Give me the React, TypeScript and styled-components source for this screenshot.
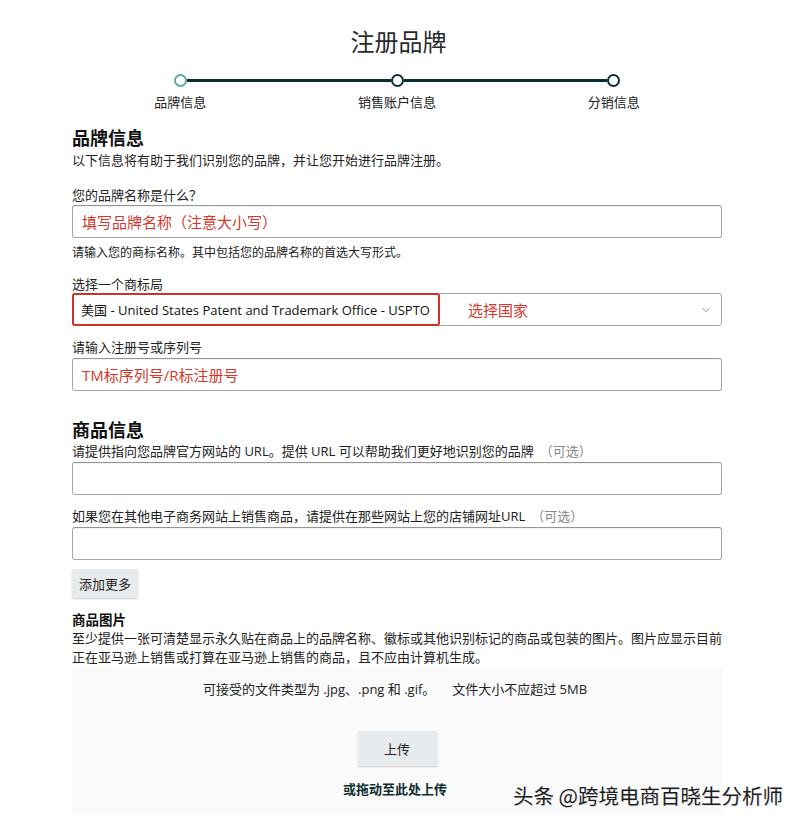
import React from "react";
import styled, { createGlobalStyle } from "styled-components";
import { ChevronDown } from "lucide-react";

const GlobalStyle = createGlobalStyle`
  html, body { margin: 0; padding: 0; background: #fff; }
  body {
    font-family: "Open Sans", "Noto Sans CJK SC", sans-serif;
    color: #111;
  }
`;

const Page = styled.div`
  position: relative;
  width: 797px;
  height: 822px;
  overflow: hidden;
  padding-top: 26px;
  box-sizing: border-box;
`;

const Title = styled.h1`
  margin: 0;
  font-size: 24px;
  line-height: 32px;
  font-weight: 400;
  text-align: center;
  color: #2a2a2a;
`;

const Content = styled.div`
  width: 650px;
  margin-left: 72px;
`;

const Stepper = styled.div`
  display: grid;
  grid-template-columns: repeat(3, 1fr);
  margin-top: 16px;
`;

const Step = styled.div`
  display: flex;
  flex-direction: column;
  align-items: center;
`;

const DotRow = styled.div`
  display: flex;
  align-items: center;
  width: 100%;
  height: 13px;
`;

const Seg = styled.div<{ $hidden?: boolean }>`
  flex: 1;
  height: 3px;
  background: ${(p) => (p.$hidden ? "transparent" : "#0e2d31")};
`;

const Dot = styled.div<{ $active?: boolean }>`
  flex: none;
  width: 13px;
  height: 13px;
  box-sizing: border-box;
  border-radius: 50%;
  border: 2px solid ${(p) => (p.$active ? "#5aa9a9" : "#0e2d31")};
  background: #fff;
`;

const StepLabel = styled.div`
  margin-top: 6px;
  font-size: 13px;
  line-height: 18px;
  color: #222;
`;

const SectionTitle = styled.h2<{ $mt: number }>`
  margin: ${(p) => p.$mt}px 0 0;
  font-size: 18px;
  line-height: 24px;
  font-weight: 700;
  color: #111;
`;

const Text = styled.div<{ $mt?: number; $size?: number }>`
  margin-top: ${(p) => p.$mt ?? 0}px;
  font-size: ${(p) => p.$size ?? 13}px;
  line-height: 18px;
  color: #222;
`;

const Optional = styled.span`
  color: #888;
  margin-left: 6px;
`;

const Box = styled.div<{ $mt: number }>`
  margin-top: ${(p) => p.$mt}px;
  height: 33px;
  box-sizing: border-box;
  border: 1px solid #a6a6a6;
  border-top-color: #949494;
  border-radius: 3px;
  box-shadow: inset 0 1px 0 rgba(0, 0, 0, 0.05);
  display: flex;
  align-items: center;
  padding-left: 9px;
`;

const Annot = styled.span`
  color: #d4382c;
  font-size: 15px;
`;

const Select = styled.div`
  margin-top: 0;
  height: 33px;
  box-sizing: border-box;
  border: 1px solid #a6a6a6;
  border-radius: 3px;
  display: flex;
  align-items: stretch;
  color: #111;
`;

const Highlight = styled.div`
  margin: -1px 0 -1px -1px;
  border: 2px solid #d2302b;
  border-radius: 3px;
  display: flex;
  align-items: center;
  padding: 0 8px 0 7px;
  font-size: 13px;
  white-space: nowrap;
`;

const SelectNote = styled(Annot)`
  display: flex;
  align-items: center;
  margin-left: 28px;
  flex: 1;
`;

const Chevron = styled.div`
  display: flex;
  align-items: center;
  margin-right: 8px;
  color: #8a8a8a;
`;

const GrayButton = styled.button<{ $mt?: number; $w: number; $h: number }>`
  display: block;
  margin-top: ${(p) => p.$mt ?? 0}px;
  width: ${(p) => p.$w}px;
  height: ${(p) => p.$h}px;
  border: none;
  border-radius: 2px;
  background: #e8ebed;
  box-shadow: 0 1px 2px rgba(0, 0, 0, 0.2);
  font-family: inherit;
  font-size: 13px;
  color: #222;
  padding: 0;
`;

const SubTitle = styled.div`
  margin-top: 13px;
  font-size: 13.5px;
  line-height: 18px;
  font-weight: 700;
  color: #111;
`;

const Paragraph = styled.p`
  margin: 0;
  font-size: 13px;
  line-height: 19px;
  color: #222;
`;

const UploadArea = styled.div`
  background: #fafafa;
  padding: 13px 0 16px;
  display: flex;
  flex-direction: column;
  align-items: center;
`;

const UploadNote = styled.div`
  margin-left: -4px;
  font-size: 13px;
  line-height: 18px;
  color: #222;
  white-space: pre;
`;

const UploadButton = styled(GrayButton)`
  margin: 33px 0 0 0;
`;

const DragText = styled.div`
  margin: 14px 0 0 -4px;
  font-size: 13px;
  line-height: 18px;
  font-weight: 700;
  color: #0e2d31;
`;

const Watermark = styled.div`
  position: absolute;
  left: 513px;
  top: 781px;
  font-size: 20.5px;
  line-height: 28px;
  color: #1c1c1c;
  text-shadow: 0 0 3px #fff, 1px 1px 0 rgba(0, 0, 0, 0.15);
  font-family: "Noto Sans CJK SC", sans-serif;
`;

const steps = ["品牌信息", "销售账户信息", "分销信息"];

export default function App() {
  return (
    <>
      <GlobalStyle />
      <Page>
        <Title>注册品牌</Title>
        <Content>
          <Stepper>
            {steps.map((s, i) => (
              <Step key={s}>
                <DotRow>
                  <Seg $hidden={i === 0} />
                  <Dot $active={i === 0} />
                  <Seg $hidden={i === steps.length - 1} />
                </DotRow>
                <StepLabel>{s}</StepLabel>
              </Step>
            ))}
          </Stepper>

          <SectionTitle $mt={15}>品牌信息</SectionTitle>
          <Text $mt={1}>以下信息将有助于我们识别您的品牌，并让您开始进行品牌注册。</Text>

          <Text $mt={17}>您的品牌名称是什么？</Text>
          <Box $mt={1}>
            <Annot>填写品牌名称（注意大小写）</Annot>
          </Box>
          <Text $mt={6} $size={12}>
            请输入您的商标名称。其中包括您的品牌名称的首选大写形式。
          </Text>

          <Text $mt={13}>选择一个商标局</Text>
          <Select>
            <Highlight>美国 - United States Patent and Trademark Office - USPTO</Highlight>
            <SelectNote>选择国家</SelectNote>
            <Chevron>
              <ChevronDown size={14} strokeWidth={1.5} />
            </Chevron>
          </Select>

          <Text $mt={12}>请输入注册号或序列号</Text>
          <Box $mt={2}>
            <Annot>TM标序列号/R标注册号</Annot>
          </Box>

          <SectionTitle $mt={27}>商品信息</SectionTitle>
          <Text>
            请提供指向您品牌官方网站的 URL。提供 URL 可以帮助我们更好地识别您的品牌
            <Optional>（可选）</Optional>
          </Text>
          <Box $mt={2} />

          <Text $mt={12}>
            如果您在其他电子商务网站上销售商品，请提供在那些网站上您的店铺网址URL
            <Optional>（可选）</Optional>
          </Text>
          <Box $mt={2} />

          <GrayButton $mt={9} $w={66} $h={29}>添加更多</GrayButton>

          <SubTitle>商品图片</SubTitle>
          <Paragraph>
            至少提供一张可清楚显示永久贴在商品上的品牌名称、徽标或其他识别标记的商品或包装的图片。图片应显示目前
            <br />
            正在亚马逊上销售或打算在亚马逊上销售的商品，且不应由计算机生成。
          </Paragraph>

          <UploadArea>
            <UploadNote>{"可接受的文件类型为 .jpg、.png 和 .gif。     文件大小不应超过 5MB"}</UploadNote>
            <UploadButton $w={79} $h={35}>上传</UploadButton>
            <DragText>或拖动至此处上传</DragText>
          </UploadArea>
        </Content>
        <Watermark>头条 @跨境电商百晓生分析师</Watermark>
      </Page>
    </>
  );
}
